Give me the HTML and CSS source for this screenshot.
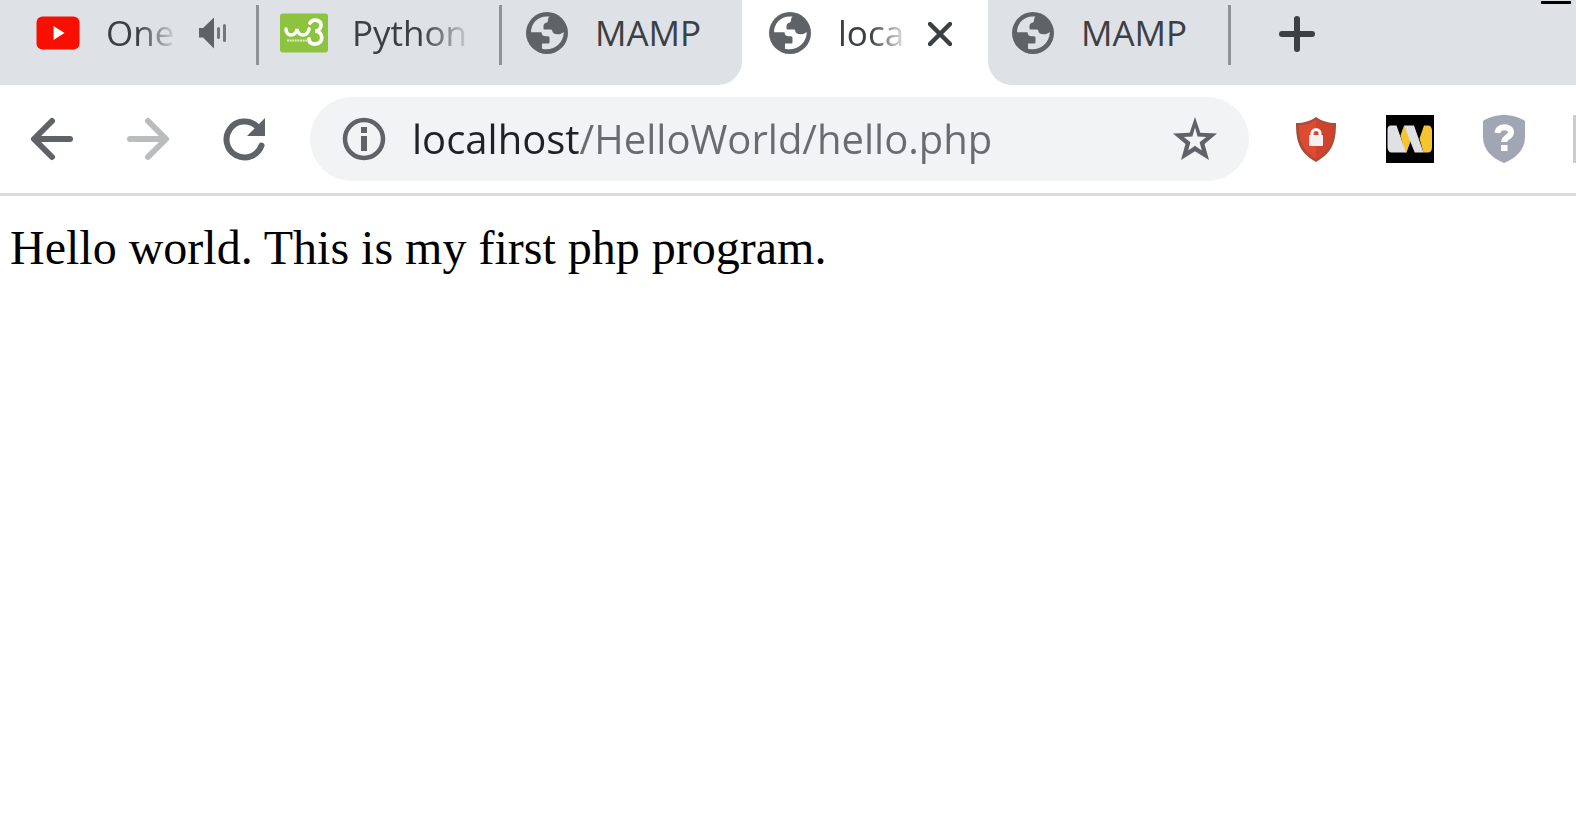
FILE: index.html
```html
<!DOCTYPE html>
<html lang="en">
<head>
<meta charset="utf-8">
<title>localhost/HelloWorld/hello.php</title>
<link rel="stylesheet" href="styles.css">
</head>
<body>
<svg class="defs" aria-hidden="true">
  <symbol id="globe" viewBox="0 0 48 48">
    <circle cx="24" cy="24" r="21" fill="#5f6368"/>
    <path fill="var(--land)" d="M26.500 7.600C16 6 8 13.500 8 23.300h10.500c.3 3 1.800 4 4.500 4h2c1.200 0 1.500.8 1.500 2V33c0 1-.5 1.500-1.500 1.500h-6v5.200C30 42.500 40.500 35 40.800 23c-2 1.500-3.800 2.300-6 2.300-3.300 0-5-1-5.500-3.300-.2-1.200-.8-1.500-2-1.500h-5.500c-1 0-1.300-.5-1.300-1.500v-1.500c0-2 1-3.500 2.500-3.700 1.500-.2 1.800-1 2-2.600.1-1.500.5-2.400 1.500-3.600z"/>
  </symbol>
</svg>
<header class="browser">
  <div class="strip">
    <div class="group before" role="tablist">
      <button class="tab first" role="tab">
        <svg class="icon" viewBox="0 0 48 48"><rect x="2.500" y="7.500" width="43" height="33" rx="6" fill="#f90f00"/><path d="M19.500 17v14l11-7z" fill="#fff"/></svg>
        <span class="title cut short">One</span>
        <svg class="sound" viewBox="0 0 30 32"><path d="M1 11h4L16 0.500v31L5 20.500H1z" fill="#5f6368"/><path d="M20.500 11.500v9M26.500 8.500v15" stroke="#74777c" stroke-width="3" stroke-linecap="round"/></svg>
      </button>
      <button class="tab" role="tab">
        <svg class="icon" viewBox="0 0 48 48"><rect y="4.500" width="48" height="39" rx="3" fill="#8dc33f"/><path d="M6 20c0 8 10 8 11 0 1 8 11 8 12 0" fill="none" stroke="#fff" stroke-width="3.500" stroke-linecap="round"/><path d="M30 14c3-5 12-3 11 3-.5 4-4 5-6 5 9 0 9 13 0 13-4 0-6-2-6-5" fill="none" stroke="#fff" stroke-width="3.800" stroke-linecap="round"/><path d="M7 31.500h20" stroke="#d9edbd" stroke-width="2" stroke-dasharray="2 .6"/></svg>
        <span class="title cut">Python T</span>
      </button>
      <button class="tab last" role="tab">
        <svg class="icon"><use href="#globe"/></svg>
        <span class="title">MAMP</span>
      </button>
    </div>
    <div class="active">
      <button class="tab current" role="tab" aria-selected="true">
        <svg class="icon"><use href="#globe"/></svg>
        <span class="title cut short">loca</span>
      </button>
      <button class="close" aria-label="Close tab"><svg viewBox="0 0 24 24"><path d="M2 2l20 20M22 2L2 22" stroke="#3c4043" stroke-width="4.500" stroke-linecap="round"/></svg></button>
    </div>
    <div class="group after">
      <button class="tab" role="tab">
        <svg class="icon"><use href="#globe"/></svg>
        <span class="title">MAMP</span>
      </button>
      <button class="new" aria-label="New tab"><svg viewBox="0 0 36 36"><path d="M18 3v30M3 18h30" stroke="#3c4043" stroke-width="6" stroke-linecap="round"/></svg></button>
      <button class="minimize" aria-label="Minimize"></button>
    </div>
  </div>
  <div class="toolbar">
    <nav class="nav">
      <button aria-label="Back"><svg class="icon" viewBox="0 0 48 48"><path d="M42 24H7M24 6L6 24l18 18" fill="none" stroke="#5f6368" stroke-width="6" stroke-linecap="round" stroke-linejoin="round"/></svg></button>
      <button aria-label="Forward"><svg class="icon" viewBox="0 0 48 48"><path d="M6 24h35M24 6l18 18-18 18" fill="none" stroke="#babcbe" stroke-width="6" stroke-linecap="round" stroke-linejoin="round"/></svg></button>
      <button aria-label="Reload"><svg class="icon" viewBox="0 0 48 48"><path d="M41.500 30.500A18 18 0 1 1 37 11.500" fill="none" stroke="#5f6368" stroke-width="6" stroke-linecap="round"/><path d="M45 3v18H27z" fill="#5f6368"/></svg></button>
    </nav>
    <div class="omnibox">
      <button aria-label="View site information"><svg class="icon" viewBox="0 0 48 48"><circle cx="24" cy="24" r="19" fill="none" stroke="#5f6368" stroke-width="4.500"/><path d="M21 12h6v6h-6zM21 21h6v15h-6z" fill="#5f6368"/></svg></button>
      <input class="url" type="text" aria-label="Address" value="localhost/HelloWorld/hello.php">
      <button aria-label="Bookmark this page"><svg class="icon" viewBox="0 0 48 48"><path fill="#5f6368" fill-rule="evenodd" d="M24 2l5.300 15.700L46 18.500 33.500 29 38 45 24 36.200 10 45l4.500-16L2 18.500l16.700-.8zM24 12.500l-2.600 9-8.600.5 6.600 5.200-2.200 8.300 6.800-4.700 6.800 4.700-2.200-8.300 6.600-5.200-8.600-.5z"/></svg></button>
    </div>
    <div class="extensions">
      <button aria-label="Ad blocker"><svg class="icon" viewBox="0 0 48 48"><path d="M24 2c6 4 12 6 20 6 0 16-2 29-20 39C6 37 4 24 4 8c8 0 14-2 20-6z" fill="#ad4a38"/><path d="M24 5c6 3.500 11 5 17 5.500 0 13-2 24-17 33.500C9 34.500 7 23.500 7 10.500 13 10 18 8.500 24 5z" fill="#de4b33"/><path d="M24 5c6 3.500 11 5 17 5.500 0 13-2 24-17 33.500z" fill="#cf432d"/><path d="M20 22v-3.500a4 4 0 0 1 8 0V22" fill="none" stroke="#fff" stroke-width="3"/><rect x="17" y="20" width="14" height="11" rx="1" fill="#f6f1f0"/></svg></button>
      <button aria-label="Web extension"><svg class="icon" viewBox="0 0 48 48"><path d="M0 0h48v48H0z"/><path d="M18 10.500l-3.500 10L19 37.500h1.500L25 25zM38 10.500h4c2.500 0 4 2 4 5v17c0 3-1.500 5-4 5h-4.500l-4-14z" fill="#f4c52f"/><path d="M5 10.500h5.500L20 37.500H5.500c-2.500 0-3.500-2-4-5V15c0-3 1-4.500 3.500-4.500zM18 10.500h10l9.500 27h-8.800z" fill="#e0e1e5"/></svg></button>
      <button aria-label="Site safety"><svg class="icon" viewBox="0 0 48 48"><path d="M24 0c7 0 15 2 21 6v16c0 13-9 21-21 26C12 43 3 35 3 22V6C9 2 17 0 24 0z" fill="#a1a6b4"/><path d="M17.500 18c.5-7.500 13.500-7.500 13.500-.5 0 5-6.800 4-6.800 9.500" fill="none" stroke="#fff" stroke-width="6"/><path d="M21 30h6.500v6H21z" fill="#fff"/></svg></button>
    </div>
    <div class="divider"></div>
  </div>
</header>
<main class="page">Hello world. This is my first php program.</main>
</body>
</html>
```
FILE: styles.css
```css
* { box-sizing: border-box; }
body {
  margin: 0;
  background: #fff;
  color: #000;
  font-family: "Liberation Serif", serif;
  font-size: 48px;
}
button {
  border: 0;
  padding: 0;
  background: none;
  color: inherit;
  font: inherit;
  display: flex;
  flex: none;
}
svg { display: block; flex: none; }
.defs { position: absolute; width: 0; height: 0; }
.icon { width: 48px; height: 48px; }
.browser { font-family: "Open Sans", "Noto Sans", sans-serif; }

.strip { display: flex; height: 85px; background: #fff; --land: #dee1e6; }
.group { display: flex; background: #dee1e6; }
.before { padding-left: 13px; border-bottom-right-radius: 24px; }
.after { flex: 1; border-bottom-left-radius: 24px; }
.tab {
  width: 243px;
  height: 60px;
  margin-top: 5px;
  padding: 4px 0 8px 21px;
  align-items: center;
  gap: 24px;
  border-right: 3px solid #8f9297;
  color: #3c4043;
  font-size: 35px;
  line-height: 48px;
  text-align: left;
}
.first { width: 246px; }
.last { width: 240px; border-right: 0; }
.title { white-space: nowrap; }
.cut {
  width: 146px;
  overflow: hidden;
  mask-image: linear-gradient(to right, #000 70px, transparent 122px);
}
.short { width: 68px; mask-image: linear-gradient(to right, #000 32px, transparent 72px); }
.sound { width: 30px; height: 32px; }
.active { display: flex; width: 246px; --land: #fff; }
.current { width: 186px; padding-left: 24px; border: 0; }
.close { margin-top: 22px; }
.close svg { width: 24px; height: 24px; }
.new { margin: 16px 0 0 48px; align-self: flex-start; }
.new svg { width: 36px; height: 36px; }
.minimize { width: 30px; height: 3px; margin: 1px 5px 0 auto; background: #000; }

.toolbar {
  display: flex;
  align-items: center;
  height: 111px;
  padding-left: 28px;
  border-bottom: 3px solid #dadce0;
}
.nav { display: flex; gap: 48px; }
.omnibox {
  display: flex;
  align-items: center;
  flex: 1;
  min-width: 0;
  height: 84px;
  margin: 0 43px 0 42px;
  padding: 0 30px;
  border-radius: 42px;
  background: #f1f3f4;
}
.url {
  flex: 1;
  min-width: 0;
  height: 60px;
  margin: 0 24px;
  padding: 0;
  border: 0;
  outline: 0;
  font: 40px/60px "Open Sans", "Noto Sans", sans-serif;
  color: transparent;
  background: linear-gradient(to right, #202124 168px, #696b6e 168px);
  -webkit-background-clip: text;
  background-clip: text;
}
.extensions { display: flex; gap: 46px; }
.divider { width: 3px; height: 48px; margin-left: 45px; background: #cdcdcd; }

.page { padding: 24px 10px; }
```
